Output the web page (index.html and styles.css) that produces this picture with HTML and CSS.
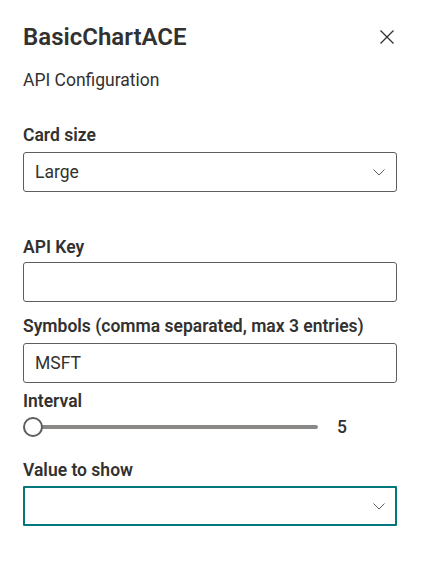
FILE: index.html
```html
<!DOCTYPE html>
<html lang="en">
<head>
<meta charset="utf-8">
<title>BasicChartACE</title>
<link rel="stylesheet" href="styles.css">
</head>
<body>
<div class="pane">
  <div class="header">
    <h1 class="title">BasicChartACE</h1>
    <button class="close" aria-label="Close">
      <svg width="14" height="14" viewBox="0 0 14 14"><path d="M0.5 0.5 L13.5 13.5 M13.5 0.5 L0.5 13.5" stroke="#323130" stroke-width="1.3" fill="none"/></svg>
    </button>
  </div>
  <div class="group-name">API Configuration</div>

  <label class="label l-card">Card size</label>
  <div class="dropdown d-card">
    <span class="dd-text">Large</span>
    <svg class="chev" width="12" height="7" viewBox="0 0 12 7"><path d="M0.5 0.5 L6 6 L11.5 0.5" stroke="#605e5c" stroke-width="1" fill="none"/></svg>
  </div>

  <label class="label l-key">API Key</label>
  <div class="textfield f-key"></div>

  <label class="label l-sym">Symbols (comma separated, max 3 entries)</label>
  <div class="textfield f-sym">MSFT</div>

  <label class="label l-int">Interval</label>
  <div class="slider">
    <div class="slider-rail">
      <span class="thumb"></span>
    </div>
    <span class="slider-value">5</span>
  </div>

  <label class="label l-val">Value to show</label>
  <div class="dropdown d-val focused">
    <span class="dd-text"></span>
    <svg class="chev" width="12" height="7" viewBox="0 0 12 7"><path d="M0.5 0.5 L6 6 L11.5 0.5" stroke="#605e5c" stroke-width="1" fill="none"/></svg>
  </div>
</div>
</body>
</html>
```
FILE: styles.css
```css
* { box-sizing: border-box; }
html, body { margin: 0; padding: 0; background: #ffffff; }
body {
  font-family: Roboto, "Segoe UI", Arial, sans-serif;
  color: #323130;
  width: 423px;
  height: 567px;
  overflow: hidden;
}
.pane {
  padding: 21px 26px 0 23px;
  display: flex;
  flex-direction: column;
}
.header {
  display: flex;
  align-items: center;
  justify-content: space-between;
  height: 32px;
}
.title {
  margin: 0;
  font-size: 24px;
  font-weight: 600;
  line-height: 32px;
  color: #323130;
}
.close {
  border: 0;
  background: transparent;
  padding: 0;
  margin: 0 3px 0 0;
  width: 14px;
  height: 14px;
  display: flex;
}
.group-name {
  margin-top: 15px;
  font-size: 17.5px;
  line-height: 24px;
  font-weight: 400;
}
.label {
  display: block;
  font-size: 17.5px;
  line-height: 24px;
  font-weight: 600;
}
.l-card { margin-top: 31px; }
.l-key { margin-top: 43px; }
.l-sym { margin-top: 12px; }
.l-int { margin-top: 6px; }
.l-val { margin-top: 17px; }

.dropdown, .textfield {
  height: 40px;
  border: 1px solid #605e5c;
  border-radius: 3px;
  font-size: 17.5px;
  line-height: 24px;
  padding: 0 11px;
  display: flex;
  align-items: center;
}
.d-card { margin-top: 5px; }
.f-key { margin-top: 3px; }
.f-sym { margin-top: 5px; }
.d-val { margin-top: 4px; }
.dropdown { justify-content: space-between; padding-right: 11px; }
.dropdown.focused {
  border: 2px solid #03787c;
  border-radius: 1px;
  padding: 0 10px 0 10px;
}
.dd-text { flex: 1; }
.chev { flex: none; }

.slider {
  height: 28px;
  display: flex;
  align-items: center;
}
.slider-rail {
  position: relative;
  width: 295px;
  height: 20px;
  display: flex;
  align-items: center;
}
.slider-rail::before {
  content: "";
  display: block;
  margin-left: 10px;
  flex: 1;
  height: 4px;
  border-radius: 2px;
  background: #8a8886;
}
.thumb {
  position: absolute;
  left: 0;
  top: 0;
  width: 20px;
  height: 20px;
  border: 2px solid #605e5c;
  border-radius: 50%;
  background: #ffffff;
}
.slider-value {
  margin-left: 19px;
  font-size: 17.5px;
  line-height: 24px;
  font-weight: 500;
}
```
